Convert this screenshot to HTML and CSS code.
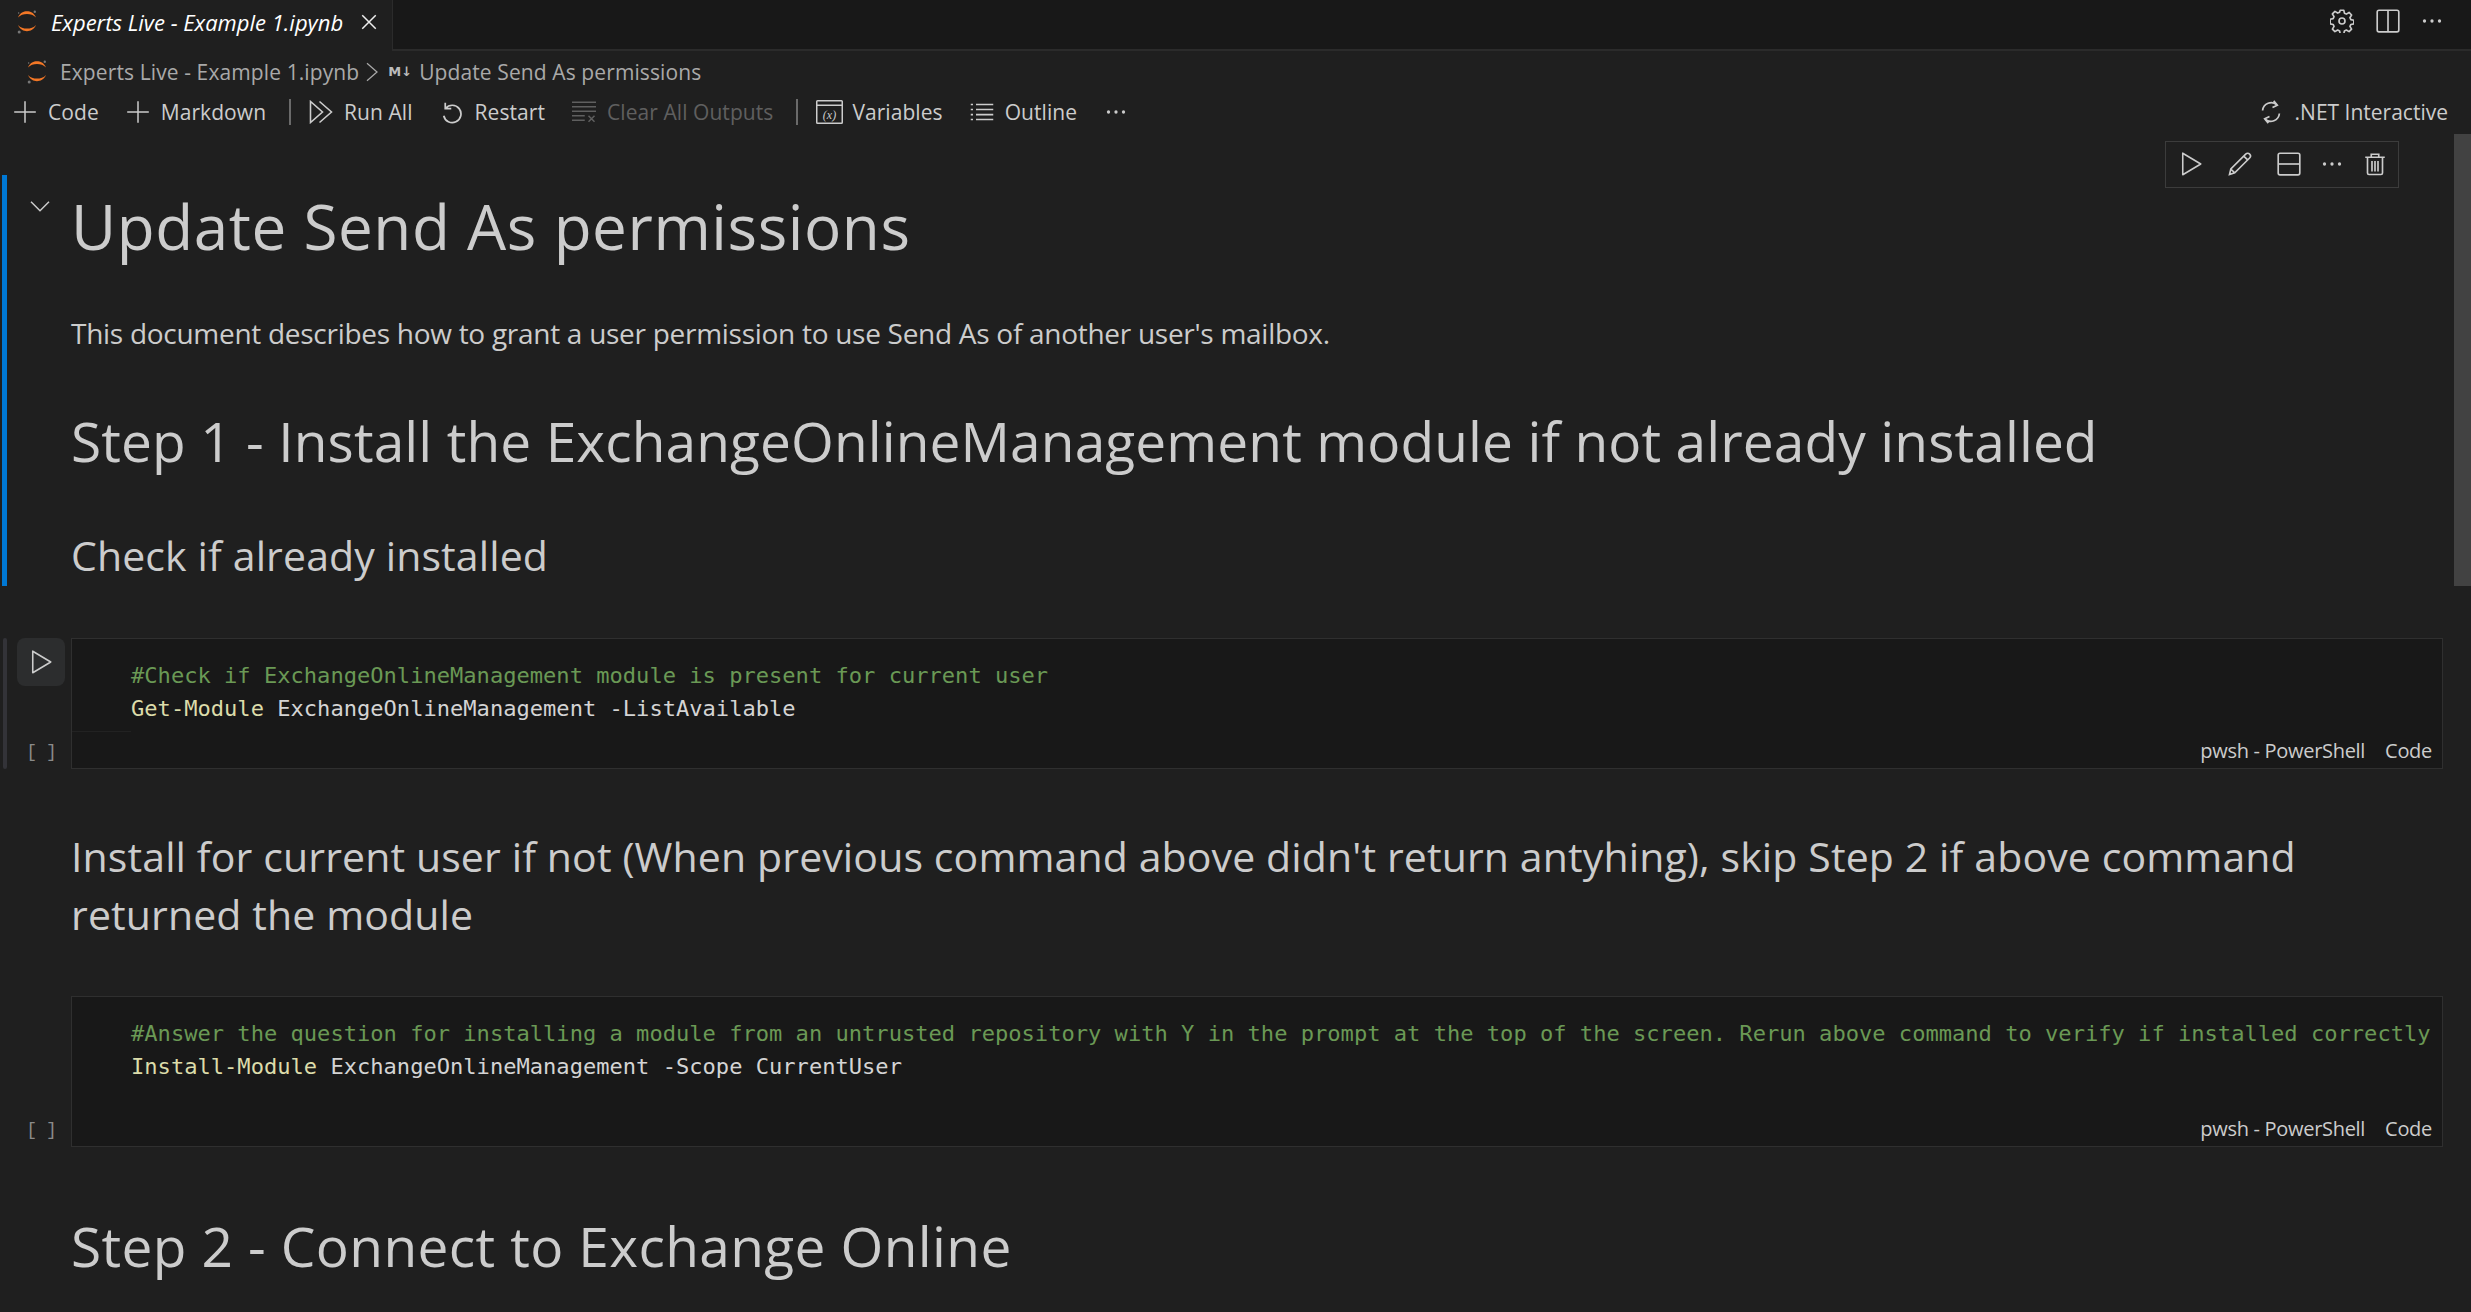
FILE: index.html
```html
<!DOCTYPE html>
<html lang="en">
<head>
<meta charset="utf-8">
<title>Experts Live - Example 1.ipynb</title>
<link rel="stylesheet" href="styles.css">
</head>
<body>
<svg class="defs" width="0" height="0" aria-hidden="true">
  <symbol id="nb" viewBox="0 0 16 16">
    <path d="M2 5C3.500 1.800 5.700 .9 8 .9s4.500.9 6 4.100C12.500 3.300 10.300 2.600 8 2.600S3.500 3.300 2 5Z" fill="#f37726"/>
    <path d="M2 10c1.500 3.200 3.700 4.100 6 4.100s4.500-.9 6-4.100c-1.500 1.700-3.700 2.400-6 2.400S3.500 11.700 2 10Z" fill="#f37726"/>
    <circle cx="13.200" cy="1.200" r=".8" fill="#777"/><circle cx="2.800" cy="14.600" r="1" fill="#777"/><circle cx="2.400" cy="2" r=".5" fill="#777"/>
  </symbol>
  <symbol id="plus" viewBox="0 0 16 16"><path d="M8 .8v14.400M.8 8h14.400" fill="none" stroke="currentColor" stroke-width="1"/></symbol>
  <symbol id="runall" viewBox="0 0 16 16"><path d="M1 1v14l8-7Z M7 1l8 7-8 7" fill="none" stroke="currentColor" stroke-width="1.050"/></symbol>
  <symbol id="play" viewBox="0 0 16 16"><path d="M2.500 .8v14.400L14.500 8Z" fill="none" stroke="currentColor" stroke-width="1.050" stroke-linejoin="round"/></symbol>
  <symbol id="restart" viewBox="0 0 16 16"><path d="M3.500 1.800v4h4M3.700 5.600A5.800 5.800 0 1 1 2.500 10.500" fill="none" stroke="currentColor" stroke-width="1.150"/></symbol>
  <symbol id="clear" viewBox="0 0 16 16"><path d="M0 1.500h16M0 4.500h16M0 7.500h16M0 10.500h8.500M0 13.500h8.500M11 10.500l4 4M15 10.500l-4 4" fill="none" stroke="currentColor" stroke-width="1"/></symbol>
  <symbol id="outline" viewBox="0 0 16 16"><path d="M4 3h11.500M4 6.300h11.500M4 9.700h11.500M4 13h11.500" stroke="currentColor" stroke-width="1.100"/><path d="M.5 3h1.500M.5 6.300h1.500M.5 9.700h1.500M.5 13h1.500" stroke="currentColor" stroke-width="1.100"/></symbol>
  <symbol id="dots" viewBox="0 0 16 16"><circle cx="3" cy="8" r="1.100" fill="currentColor"/><circle cx="8" cy="8" r="1.100" fill="currentColor"/><circle cx="13" cy="8" r="1.100" fill="currentColor"/></symbol>
  <symbol id="sync" viewBox="0 0 16 16"><path d="M13.600 9A5.700 5.700 0 0 1 4 12.600M2.400 7A5.700 5.700 0 0 1 12 3.400M9.800 .6l2.400 2.900-3.200 1.500M6.200 15.400 3.800 12.500 7 11" fill="none" stroke="currentColor" stroke-width="1.150"/></symbol>
  <symbol id="gear" viewBox="0 0 16 16"><path d="M6.800 .8h2.400l.4 2 1.300.6 1.800-1.100 1.700 1.700-1.100 1.800.6 1.300 2 .4v2.400l-2 .4-.6 1.300 1.100 1.800-1.700 1.700-1.800-1.100-1.300.6-.4 2H6.800l-.4-2-1.300-.6-1.800 1.100-1.700-1.700 1.100-1.800-.6-1.300-2-.4V6.800l2-.4.6-1.300-1.100-1.800 1.700-1.700 1.800 1.100 1.300-.6Z" fill="none" stroke="currentColor" stroke-width="1.100" stroke-linejoin="round"/><circle cx="8" cy="8" r="2" fill="none" stroke="currentColor" stroke-width="1.100"/></symbol>
  <symbol id="split" viewBox="0 0 16 16"><rect x=".8" y=".8" width="14.400" height="14.400" rx="1.200" fill="none" stroke="currentColor" stroke-width="1.100"/><path d="M8 .8v14.400" stroke="currentColor" stroke-width="1.100"/></symbol>
  <symbol id="hsplit" viewBox="0 0 16 16"><rect x=".8" y=".8" width="14.400" height="14.400" rx="1.200" fill="none" stroke="currentColor" stroke-width="1.100"/><path d="M.8 8h14.400" stroke="currentColor" stroke-width="1.100"/></symbol>
  <symbol id="pencil" viewBox="0 0 16 16"><path d="M1 15l.9-3.700L11.800 1.400a1.800 1.800 0 0 1 2.600 2.600L4.500 13.900Z M2 11.500l2.300 2.300M10.500 2.700l2.600 2.600" fill="none" stroke="currentColor" stroke-width="1.100"/></symbol>
  <symbol id="trash" viewBox="0 0 16 16"><path d="M1.500 3.500h13M5.500 3.300V1.500h5v1.800M3 3.500v10.500a1 1 0 0 0 1 1h8a1 1 0 0 0 1-1V3.500M6 6v7M8 6v7M10 6v7" fill="none" stroke="currentColor" stroke-width="1.100"/></symbol>
  <symbol id="chev" viewBox="0 0 16 16"><path d="M2 4.500 8 10.500l6-6" fill="none" stroke="currentColor" stroke-width="1"/></symbol>
  <symbol id="crumbchev" viewBox="0 0 16 16"><path d="M4 1l8 7-8 7" fill="none" stroke="currentColor" stroke-width="1"/></symbol>
</svg>

<div class="app">
  <header class="tabbar">
    <div class="tab">
      <svg class="ico-nb"><use href="#nb"/></svg>
      <span class="tab-title">Experts Live - Example 1.ipynb</span>
      <svg class="ico-close" viewBox="0 0 16 16"><path d="M2 2l12 12M14 2 2 14" fill="none" stroke="currentColor" stroke-width="1.300"/></svg>
    </div>
    <div class="tab-actions">
      <svg class="ico-24 gear"><use href="#gear"/></svg>
      <svg class="ico-24"><use href="#split"/></svg>
      <svg class="ico-24"><use href="#dots"/></svg>
    </div>
  </header>

  <nav class="crumbs">
    <svg class="ico-nb"><use href="#nb"/></svg>
    <span class="crumb">Experts Live - Example 1.ipynb</span>
    <svg class="ico-crumb"><use href="#crumbchev"/></svg>
    <span class="md-badge">M↓</span>
    <span class="crumb">Update Send As permissions</span>
  </nav>

  <div class="toolbar">
    <button class="tool"><svg class="ico-t"><use href="#plus"/></svg>Code</button>
    <button class="tool"><svg class="ico-t"><use href="#plus"/></svg>Markdown</button>
    <span class="sep"></span>
    <button class="tool"><svg class="ico-t"><use href="#runall"/></svg>Run All</button>
    <button class="tool"><svg class="ico-t"><use href="#restart"/></svg>Restart</button>
    <button class="tool dim"><svg class="ico-t"><use href="#clear"/></svg>Clear All Outputs</button>
    <span class="sep"></span>
    <button class="tool"><svg class="ico-v" viewBox="0 0 18 16"><rect x=".5" y=".5" width="17" height="15" rx=".5" fill="none" stroke="currentColor"/><path d="M.5 3.500h17" stroke="currentColor"/><text x="9" y="12.500" class="vartext">(x)</text></svg>Variables</button>
    <button class="tool"><svg class="ico-t"><use href="#outline"/></svg>Outline</button>
    <svg class="ico-t more"><use href="#dots"/></svg>
    <div class="kernel"><svg class="ico-k"><use href="#sync"/></svg>.NET Interactive</div>
  </div>

  <main class="notebook">
    <section class="md-cell">
      <svg class="ico-fold"><use href="#chev"/></svg>
      <h1>Update Send As permissions</h1>
      <p>This document describes how to grant a user permission to use Send As of another user's mailbox.</p>
      <h2>Step 1 - Install the ExchangeOnlineManagement module if not already installed</h2>
      <h3>Check if already installed</h3>
    </section>

    <section class="code-cell c1">
      <div class="gutter">
        <span class="run-btn"><svg class="ico-play"><use href="#play"/></svg></span>
        <span class="count">[ ]</span>
      </div>
      <div class="editor">
        <pre class="code"><span class="cm">#Check if ExchangeOnlineManagement module is present for current user</span>
<span class="fn">Get-Module</span> ExchangeOnlineManagement -ListAvailable</pre>
        <div class="status"><span>pwsh - PowerShell</span><span>Code</span></div>
      </div>
    </section>

    <section class="text-cell">
      <h3>Install for current user if not (When previous command above didn't return antyhing), skip Step 2 if above command returned the module</h3>
    </section>

    <section class="code-cell c2">
      <div class="gutter">
        <span class="count">[ ]</span>
      </div>
      <div class="editor">
        <pre class="code"><span class="cm">#Answer the question for installing a module from an untrusted repository with Y in the prompt at the top of the screen. Rerun above command to verify if installed correctly</span>
<span class="fn">Install-Module</span> ExchangeOnlineManagement -Scope CurrentUser</pre>
        <div class="status"><span>pwsh - PowerShell</span><span>Code</span></div>
      </div>
    </section>

    <section class="text-cell last">
      <h2>Step 2 - Connect to Exchange Online</h2>
    </section>

    <div class="cell-tools">
      <svg class="ico-c wide"><use href="#play"/></svg>
      <svg class="ico-c wide"><use href="#pencil"/></svg>
      <svg class="ico-c"><use href="#hsplit"/></svg>
      <svg class="ico-c"><use href="#dots"/></svg>
      <svg class="ico-c"><use href="#trash"/></svg>
    </div>
    <div class="scroll-thumb"></div>
  </main>
</div>
</body>
</html>
```

FILE: styles.css
```css
* { box-sizing: border-box; }
html, body { margin: 0; height: 100%; background: #1f1f1f; }
body { font-family: "Open Sans", "Noto Sans", sans-serif; color: #ccc; overflow: hidden; }
.defs { position: absolute; }
.vartext { font: italic 8px "Liberation Serif", serif; fill: currentColor; text-anchor: middle; }

.app { display: flex; flex-direction: column; height: 1312px; }

.tabbar { height: 51px; display: flex; justify-content: space-between; background: #181818; border-bottom: 2px solid #2b2b2b; flex: none; }
.tab { width: 393px; height: 51px; background: #1f1f1f; border-right: 1px solid #2b2b2b; display: flex; align-items: center; padding: 0 0 7px 15px; flex: none; }
.ico-nb { width: 24px; height: 24px; flex: none; }
.tab-title { margin-left: 12px; font-size: 22px; font-style: italic; color: #fff; white-space: nowrap; }
.ico-close { width: 18px; height: 18px; margin-left: 17px; color: #eee; flex: none; }
.tab-actions { display: flex; gap: 20px; align-items: center; padding: 0 27px 8px 0; color: #ccc; }
.ico-24 { width: 24px; height: 24px; }
.ico-24.gear { margin-right: 2px; }

.crumbs { height: 41px; display: flex; align-items: center; padding-left: 25px; flex: none; color: #a9a9a9; }
.crumbs .ico-nb { margin-right: 11px; }
.crumb { font-size: 21px; letter-spacing: .005em; white-space: nowrap; }
.ico-crumb { width: 20px; height: 20px; margin: 0 6px 0 3px; flex: none; }
.md-badge { font: bold 13px "DejaVu Sans", sans-serif; margin-right: 7px; color: #bbb; white-space: nowrap; }

.toolbar { height: 40px; display: flex; align-items: center; padding: 0 23px 0 13px; flex: none; }
.tool { display: flex; align-items: center; background: none; border: 0; padding: 0; margin: 0 27px 0 0; font: inherit; font-size: 21px; letter-spacing: .003em; color: #ccc; white-space: nowrap; }
.tool.dim { color: #5f5f5f; }
.ico-t { width: 24px; height: 24px; margin-right: 11px; flex: none; }
.ico-v { width: 27px; height: 24px; margin-right: 9px; flex: none; }
.sep { width: 2px; height: 26px; background: #6a6a6a; margin: 0 18px 0 -4px; flex: none; }
.more { margin: 0; }
.kernel { margin-left: auto; display: flex; align-items: center; font-size: 21px; }
.ico-k { width: 24px; height: 24px; margin-right: 12px; }

.notebook { position: relative; flex: 1; min-height: 0; overflow: hidden; padding: 43px 28px 0 2px; }

.md-cell { border-left: 5px solid #0078d4; padding: 0 0 0 64px; height: 411px; position: relative; }
.ico-fold { position: absolute; left: 21px; top: 20px; width: 24px; height: 24px; color: #ccc; }
h1, h2, h3, p { margin: 0; font-weight: 400; color: #ccc; white-space: nowrap; }
h1 { font-size: 62px; line-height: 84px; padding-top: 9px; letter-spacing: .009em; }
p { font-size: 28px; line-height: 40px; margin-top: 45px; letter-spacing: -.01em; }
h2 { font-size: 55px; line-height: 76px; margin-top: 50px; letter-spacing: .002em; }
h3 { font-size: 41px; line-height: 58px; margin-top: 47px; letter-spacing: .003em; }

.code-cell { display: flex; }
.c1 { margin-top: 52px; height: 131px; }
.c2 { margin-top: 53px; height: 151px; }
.gutter { width: 69px; flex: none; position: relative; display: flex; flex-direction: column; align-items: center; justify-content: flex-end; padding: 0 0 7px 10px; }
.c1 .gutter::before { content: ""; position: absolute; left: 1px; top: 0; bottom: 0; width: 4px; border-radius: 3px; background: #333338; }
.run-btn { position: absolute; left: 15px; top: 0; width: 48px; height: 48px; border-radius: 8px; background: #2c2d2e; display: flex; align-items: center; justify-content: center; }
.ico-play { width: 24px; height: 24px; color: #ccc; }
.count { font: 18px "Liberation Mono", monospace; color: #8a8a8a; word-spacing: -2px; }
.editor { flex: 1; min-width: 0; border: 1px solid #2f2f2f; background: #181818; position: relative; padding: 20px 0 0 59px; overflow: hidden; }
.c1 .editor::after { content: ""; position: absolute; left: 0; top: 92px; width: 59px; height: 1px; background: #222; }
.code { margin: 0; font: 22.09px/33px "DejaVu Sans Mono", monospace; color: #d4d4d4; white-space: pre; }
.cm { color: #6a9955; }
.fn { color: #dcdcaa; }
.status { position: absolute; right: 10px; bottom: 4px; display: flex; gap: 20px; font-size: 20px; letter-spacing: -.015em; color: #ccc; }

.text-cell { padding-left: 69px; }
.text-cell h3 { white-space: normal; margin-top: 0; padding-top: 58px; padding-right: 20px; }
.text-cell.last h2 { margin-top: 0; padding-top: 61px; letter-spacing: .007em; }

.cell-tools { position: absolute; right: 72px; top: 9px; width: 234px; height: 47px; border: 1px solid #3c3c3c; display: flex; align-items: center; gap: 19px; padding: 0 0 2px 13px; background: #1f1f1f; color: #ccc; }
.ico-c { width: 24px; height: 24px; flex: none; }
.ico-c.wide { margin-right: 6px; }
.scroll-thumb { position: absolute; right: 0; top: 2px; width: 17px; height: 452px; background: #424242; }
```
